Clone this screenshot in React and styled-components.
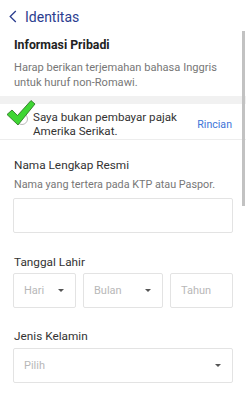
import styled, { createGlobalStyle } from "styled-components";

const GlobalStyle = createGlobalStyle`
  html, body {
    margin: 0;
    padding: 0;
    background: #ffffff;
    font-family: Roboto, "Liberation Sans", Arial, sans-serif;
    overflow: hidden;
  }
`;

const Screen = styled.div`
  position: relative;
  width: 246px;
  height: 400px;
  overflow: hidden;
  background: #fff;
`;

const Header = styled.div`
  height: 32px;
  display: flex;
  align-items: center;
  padding-left: 9px;
  gap: 8px;
  color: #2b3d8f;
  font-size: 14px;
  box-sizing: border-box;
  padding-top: 1px;
`;

const Section = styled.div`
  padding: 5px 14px 6px 14px;
`;

const Title = styled.div`
  font-size: 12.3px;
  font-weight: 700;
  line-height: 16px;
  color: #222;
`;

const Note = styled.div`
  margin-top: 7px;
  font-size: 11.1px;
  line-height: 15px;
  color: #777;
`;

const Band = styled.div`
  height: 8px;
  background: #f1f1f1;
`;

const CheckRow = styled.div`
  position: relative;
  display: flex;
  align-items: center;
  padding: 6px 14px 1px 16px;
  height: 28px;
  border-bottom: 1px solid #ededed;
`;

const Circle = styled.span`
  align-self: flex-start;
  width: 10px;
  height: 10px;
  border: 1px solid #bbb;
  border-radius: 50%;
  margin: 3px 5px 0 0;
  flex: none;
`;

const RowText = styled.div`
  flex: 1;
  font-size: 11.6px;
  line-height: 14px;
  color: #333;
`;

const LinkText = styled.span`
  font-size: 10.6px;
  color: #3d74d8;
  margin-top: 1px;
`;

const Tick = styled.svg`
  position: absolute;
  left: 6px;
  top: -7px;
`;

const Field = styled.div`
  padding: ${(p) => p.$top}px 13px 0 13px;
`;

const Label = styled.div`
  font-size: 11.8px;
  line-height: 16px;
  color: #333;
  padding-left: 1px;
`;

const Hint = styled.div`
  font-size: 10.8px;
  line-height: 15px;
  color: #777;
  margin-top: 4px;
  padding-left: 1px;
`;

const Input = styled.div`
  margin-top: ${(p) => p.$gap}px;
  height: 35px;
  border: 1px solid #e3e3e3;
  border-radius: 2px;
  box-sizing: border-box;
`;

const SelectRow = styled.div`
  margin-top: 3px;
  display: grid;
  grid-template-columns: 63px 80px 1fr;
  column-gap: 7px;
`;

const Select = styled.div`
  margin-top: ${(p) => p.$gap || 0}px;
  height: ${(p) => p.$h || 35}px;
  border: 1px solid #e3e3e3;
  border-radius: 2px;
  box-sizing: border-box;
  display: flex;
  align-items: center;
  justify-content: space-between;
  padding: 0 11px 0 10px;
  font-size: 11px;
  color: #b8b8b8;
`;

const Caret = styled.span`
  width: 0;
  height: 0;
  border-left: 3px solid transparent;
  border-right: 3px solid transparent;
  border-top: 3px solid #555;
`;

const Scrollbar = styled.div`
  position: absolute;
  left: 242px;
  top: 31px;
  width: 3px;
  height: 175px;
  background: #c2c2c2;
`;

function Chevron() {
  return (
    <svg width="8" height="13" viewBox="0 0 8 13">
      <path d="M6.8 1 L1.2 6.5 L6.8 12" fill="none" stroke="#2b3d8f" strokeWidth="1.3" />
    </svg>
  );
}

export default function App() {
  return (
    <Screen>
      <GlobalStyle />
      <Header>
        <Chevron />
        <span>Identitas</span>
      </Header>
      <Section>
        <Title>Informasi Pribadi</Title>
        <Note>
          Harap berikan terjemahan bahasa Inggris
          <br />
          untuk huruf non-Romawi.
        </Note>
      </Section>
      <Band />
      <CheckRow>
        <Circle />
        <RowText>
          Saya bukan pembayar pajak
          <br />
          Amerika Serikat.
        </RowText>
        <LinkText>Rincian</LinkText>
        <Tick width="30" height="30" viewBox="0 0 30 30">
          <path
            d="M1 17.5 L6 13 L11.5 18.5 L25 3.5 L29 7 L12 28 Z"
            fill="#3fd634"
            stroke="#246b1a"
            strokeWidth="0.8"
            strokeLinejoin="round"
          />
        </Tick>
      </CheckRow>
      <Field $top={17}>
        <Label>Nama Lengkap Resmi</Label>
        <Hint>Nama yang tertera pada KTP atau Paspor.</Hint>
        <Input $gap={6} />
      </Field>
      <Field $top={21}>
        <Label>Tanggal Lahir</Label>
        <SelectRow>
          <Select>
            Hari <Caret />
          </Select>
          <Select>
            Bulan <Caret />
          </Select>
          <Select>Tahun</Select>
        </SelectRow>
      </Field>
      <Field $top={20}>
        <Label>Jenis Kelamin</Label>
        <Select $gap={4} $h={35}>
          Pilih <Caret />
        </Select>
      </Field>
      <Scrollbar />
    </Screen>
  );
}
